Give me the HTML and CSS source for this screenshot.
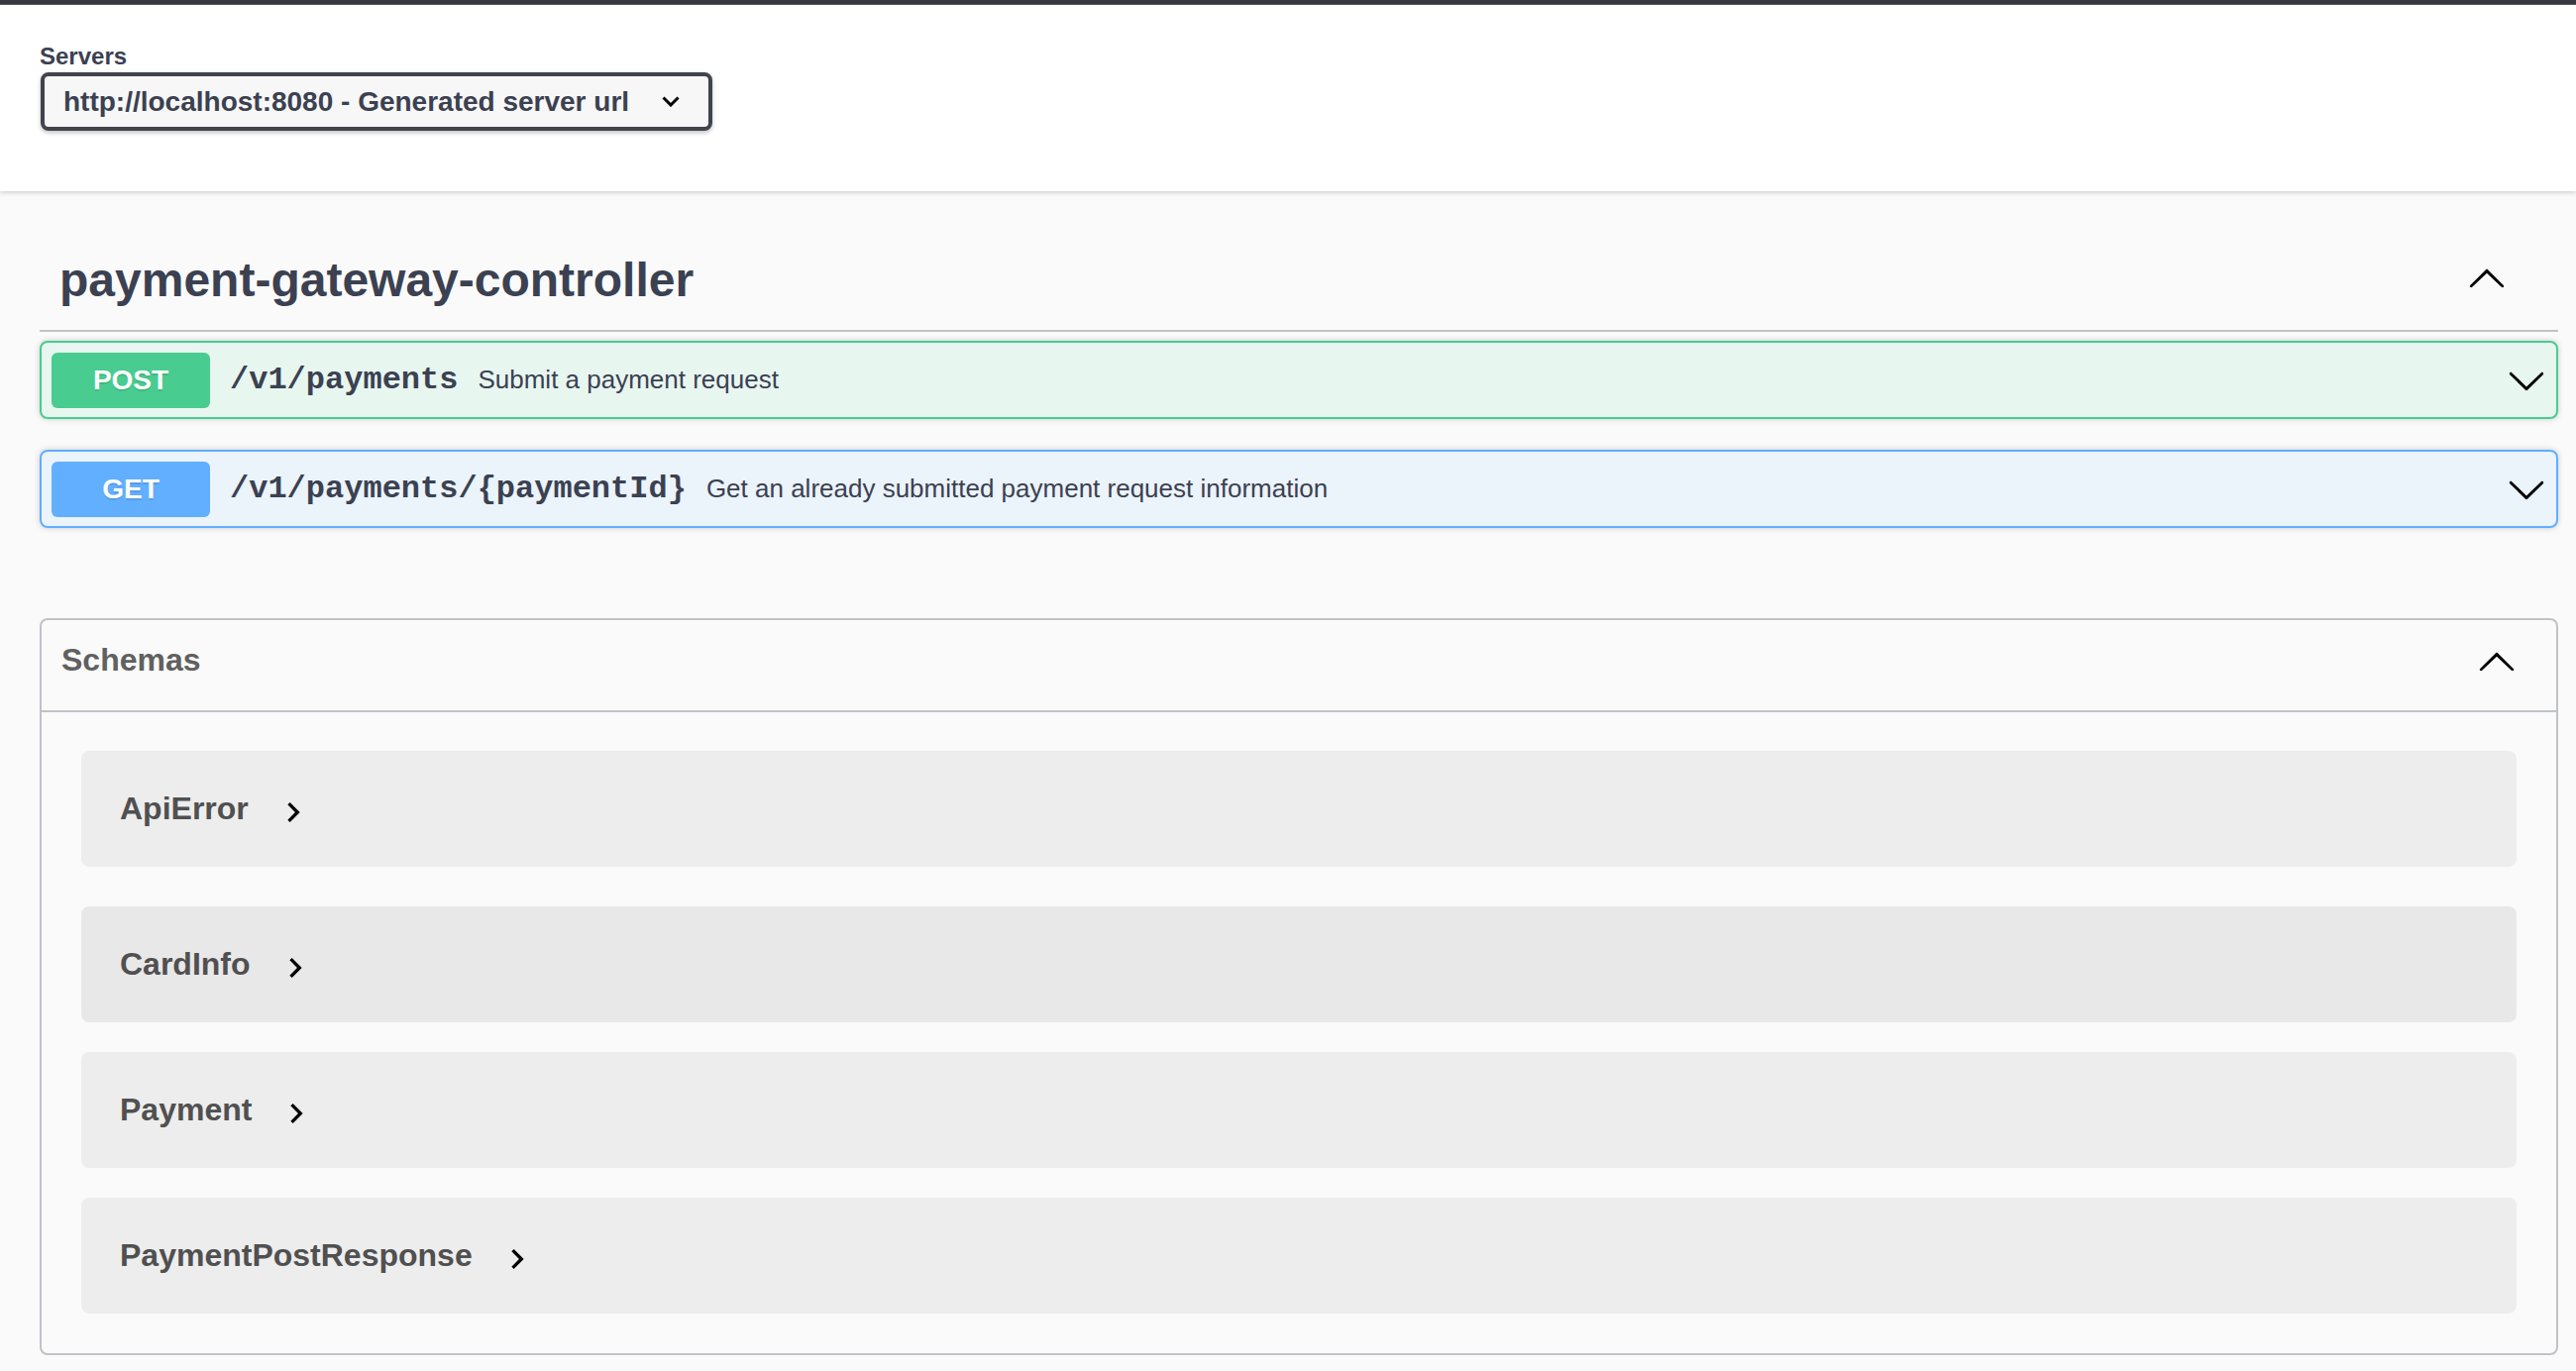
FILE: index.html
```html
<!DOCTYPE html>
<html lang="en">
<head>
<meta charset="utf-8">
<title>Swagger UI</title>
<link rel="stylesheet" href="styles.css">
</head>
<body>
<div class="topbar"></div>
<div class="scheme-container">
  <div class="servers">
    <label class="servers-label">Servers</label>
    <div class="select">
      <span class="select-text">http://localhost:8080 - Generated server url</span>
      <svg class="select-caret" width="18" height="11" viewBox="0 0 18 11"><path d="M1.5 1.5 L9 9 L16.5 1.5" fill="none" stroke="#000" stroke-width="3"/></svg>
    </div>
  </div>
</div>
<div class="wrapper">
  <div class="tag-section">
    <div class="opblock-tag">
      <h3 class="tag-title">payment-gateway-controller</h3>
      <svg class="arrow arrow-tag" width="40" height="40" viewBox="0 0 20 20"><path d="M 17.418 14.908 c 0.272 0.268 0.709 0.268 0.979 0 c 0.27 -0.268 0.271 -0.701 0 -0.969 l -7.908 -7.830 c -0.27 -0.268 -0.707 -0.268 -0.979 0 l -7.908 7.830 c -0.27 0.268 -0.27 0.701 0 0.969 c 0.271 0.268 0.709 0.268 0.979 0 L 10 7.846 l 7.418 7.062 z"/></svg>
    </div>
    <div class="opblock opblock-post">
      <span class="method method-post">POST</span>
      <span class="path">/v1/payments</span>
      <span class="desc">Submit a payment request</span>
      <svg class="arrow arrow-op" width="40" height="40" viewBox="0 0 20 20"><path d="M 17.418 6.109 c 0.272 -0.268 0.709 -0.268 0.979 0 s 0.271 0.701 0 0.969 l -7.908 7.83 c -0.27 0.268 -0.707 0.268 -0.979 0 l -7.908 -7.83 c -0.27 -0.268 -0.27 -0.701 0 -0.969 c 0.271 -0.268 0.709 -0.268 0.979 0 L 10 13.25 L 17.418 6.109 Z"/></svg>
    </div>
    <div class="opblock opblock-get">
      <span class="method method-get">GET</span>
      <span class="path">/v1/payments/{paymentId}</span>
      <span class="desc">Get an already submitted payment request information</span>
      <svg class="arrow arrow-op" width="40" height="40" viewBox="0 0 20 20"><path d="M 17.418 6.109 c 0.272 -0.268 0.709 -0.268 0.979 0 s 0.271 0.701 0 0.969 l -7.908 7.83 c -0.27 0.268 -0.707 0.268 -0.979 0 l -7.908 -7.83 c -0.27 -0.268 -0.27 -0.701 0 -0.969 c 0.271 -0.268 0.709 -0.268 0.979 0 L 10 13.25 L 17.418 6.109 Z"/></svg>
    </div>
  </div>

  <section class="models">
    <div class="models-header">
      <h4 class="models-title">Schemas</h4>
      <svg class="arrow arrow-models" width="40" height="40" viewBox="0 0 20 20"><path d="M 17.418 14.908 c 0.272 0.268 0.709 0.268 0.979 0 c 0.27 -0.268 0.271 -0.701 0 -0.969 l -7.908 -7.830 c -0.27 -0.268 -0.707 -0.268 -0.979 0 l -7.908 7.830 c -0.27 0.268 -0.27 0.701 0 0.969 c 0.271 0.268 0.709 0.268 0.979 0 L 10 7.846 l 7.418 7.062 z"/></svg>
    </div>
    <div class="models-body">
      <div class="model-container first">
        <span class="model-title">ApiError</span>
        <svg class="model-toggle" width="40" height="40" viewBox="0 0 24 24"><path d="M10 6L8.59 7.41 13.17 12l-4.58 4.59L10 18l6-6z"/></svg>
      </div>
      <div class="model-container hover">
        <span class="model-title">CardInfo</span>
        <svg class="model-toggle" width="40" height="40" viewBox="0 0 24 24"><path d="M10 6L8.59 7.41 13.17 12l-4.58 4.59L10 18l6-6z"/></svg>
      </div>
      <div class="model-container">
        <span class="model-title">Payment</span>
        <svg class="model-toggle" width="40" height="40" viewBox="0 0 24 24"><path d="M10 6L8.59 7.41 13.17 12l-4.58 4.59L10 18l6-6z"/></svg>
      </div>
      <div class="model-container last">
        <span class="model-title">PaymentPostResponse</span>
        <svg class="model-toggle" width="40" height="40" viewBox="0 0 24 24"><path d="M10 6L8.59 7.41 13.17 12l-4.58 4.59L10 18l6-6z"/></svg>
      </div>
    </div>
  </section>
</div>
</body>
</html>
```

FILE: styles.css
```css
* { box-sizing: border-box; }

html, body {
  margin: 0;
  padding: 0;
}

body {
  background: #fafafa;
  font-family: "Liberation Sans", Arial, Helvetica, sans-serif;
  color: #3b4151;
  min-height: 1384px;
}

.topbar {
  height: 5px;
  background: #37383d;
  border-bottom: 1px solid #5a5b5f;
}

.scheme-container {
  height: 188px;
  background: #fff;
  box-shadow: 0 2px 4px 0 rgba(0, 0, 0, 0.15);
  padding: 38px 0 0 40px;
  position: relative;
}

.servers {
  display: flex;
  flex-direction: column;
  align-items: flex-start;
}

.servers-label {
  font-size: 24px;
  line-height: 28px;
  font-weight: 700;
  color: #3b4151;
}

.select {
  margin-top: 2px;
  margin-left: 1px;
  width: 678px;
  height: 59px;
  border: 4px solid #41444e;
  border-radius: 8px;
  background: #f7f7f7;
  box-shadow: 0 2px 4px 0 rgba(0, 0, 0, 0.25);
  display: flex;
  align-items: center;
  padding: 0 29px 0 19px;
}

.select-text {
  font-size: 28px;
  font-weight: 700;
  color: #3b4151;
  white-space: nowrap;
}

.select-caret {
  margin-left: auto;
}

.wrapper {
  padding: 0 18px 0 40px;
}

.tag-section {
  margin-top: 44px;
}

.opblock-tag {
  display: flex;
  align-items: flex-start;
  padding: 17px 52px 21px 20px;
  border-bottom: 2px solid rgba(59, 65, 81, 0.3);
  margin-bottom: 9px;
}

.tag-title {
  margin: 0;
  font-size: 48px;
  line-height: 58px;
  font-weight: 700;
  color: #3b4151;
}

.arrow {
  fill: #000;
  flex: none;
}

.arrow-tag {
  margin-left: auto;
  margin-top: 6px;
}

.opblock {
  height: 79px;
  border: 2px solid;
  border-radius: 8px;
  box-shadow: 0 0 6px rgba(0, 0, 0, 0.19);
  display: flex;
  align-items: center;
  padding: 0 10px;
  margin-bottom: 31px;
}

.opblock-post {
  background: #e8f6f0;
  border-color: #49cc90;
}

.opblock-get {
  background: #ebf3fb;
  border-color: #61affe;
}

.method {
  flex: none;
  width: 160px;
  height: 56px;
  border-radius: 6px;
  color: #fff;
  font-size: 28px;
  font-weight: 700;
  display: flex;
  align-items: center;
  justify-content: center;
  text-shadow: 0 2px 0 rgba(0, 0, 0, 0.1);
}

.method-post { background: #49cc90; }
.method-get { background: #61affe; }

.path {
  font-family: "Liberation Mono", "Courier New", monospace;
  font-size: 32px;
  font-weight: 700;
  color: #3b4151;
  padding: 0 20px;
  white-space: nowrap;
}

.desc {
  font-size: 26px;
  color: #3b4151;
  flex: 1 1 auto;
}

.arrow-op {
  margin-left: auto;
}

.models {
  margin-top: 91px;
  border: 2px solid rgba(59, 65, 81, 0.3);
  border-radius: 8px;
  background: #fafafa;
}

.models-header {
  height: 93px;
  display: flex;
  align-items: flex-start;
  padding: 21px 40px 0 20px;
  border-bottom: 2px solid rgba(59, 65, 81, 0.3);
}

.models-title {
  margin: 1px 0 0 0;
  font-size: 32px;
  line-height: 37px;
  font-weight: 700;
  color: #606060;
}

.arrow-models {
  margin-left: auto;
}

.models-body {
  padding: 39px 40px 40px 40px;
}

.model-container {
  height: 117px;
  border-radius: 8px;
  background: #ededed;
  display: flex;
  align-items: center;
  padding-left: 39px;
  margin-bottom: 30px;
}

.model-container.first {
  margin-bottom: 40px;
}

.model-container.last {
  margin-bottom: 0;
}

.model-container.hover {
  background: #e8e8e8;
}

.model-title {
  font-size: 32px;
  font-weight: 700;
  color: #505050;
}

.model-toggle {
  fill: #000;
  margin-left: 25px;
  margin-top: 7px;
}
```
